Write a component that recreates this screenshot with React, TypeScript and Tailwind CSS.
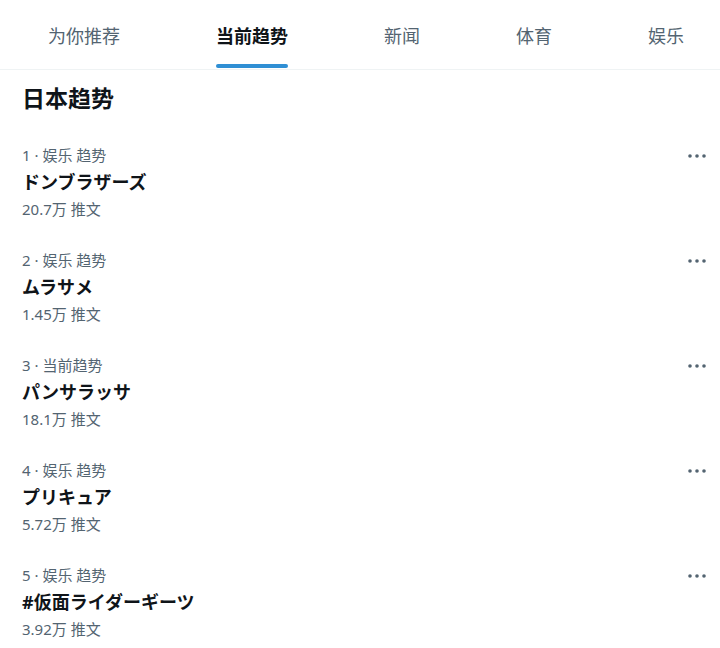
import React from 'react'

const tabs = ['为你推荐', '当前趋势', '新闻', '体育', '娱乐']

const trends = [
  { rank: 1, cat: '娱乐 趋势', name: 'ドンブラザーズ', count: '20.7万 推文' },
  { rank: 2, cat: '娱乐 趋势', name: 'ムラサメ', count: '1.45万 推文' },
  { rank: 3, cat: '当前趋势', name: 'パンサラッサ', count: '18.1万 推文' },
  { rank: 4, cat: '娱乐 趋势', name: 'プリキュア', count: '5.72万 推文' },
  { rank: 5, cat: '娱乐 趋势', name: '#仮面ライダーギーツ', count: '3.92万 推文' },
]

function Dots() {
  return (
    <svg width="18" height="6" viewBox="0 0 18 6" className="fill-[#536471]">
      <circle cx="2" cy="3" r="1.8" />
      <circle cx="9" cy="3" r="1.8" />
      <circle cx="16" cy="3" r="1.8" />
    </svg>
  )
}

export default function App() {
  return (
    <div className="w-[720px] h-[648px] bg-white overflow-hidden font-['Noto_Sans','Noto_Sans_CJK_SC',sans-serif] text-[#0f1419]">
      <nav className="flex h-[70px] border-b border-[#eff3f4] overflow-hidden">
        { tabs.map((t, i) => (
          <div key={ t } className="px-[48px] shrink-0 flex justify-center">
            <div className="inline-flex flex-col items-stretch pt-[24px]">
              <span className={`text-[18px] leading-[24px] whitespace-nowrap ${ i === 1 ? 'font-bold text-[#0f1419]' : 'text-[#536471]' }`}>{ t }</span>
              <span className={`mt-[16px] h-[4px] rounded-full ${ i === 1 ? 'bg-[#2f8fd4]' : 'bg-transparent' }`} />
            </div>
          </div>
        )) }
      </nav>

      <h2 className="px-[22px] pt-[13px] pb-[17px] text-[23px] leading-[30px] font-bold">日本趋势</h2>

      <ul>
        { trends.map(tr => (
          <li key={ tr.rank } className="pl-[22px] pr-[14px] py-3 flex justify-between">
            <div className="flex flex-col">
              <span className="text-[15px] leading-[27px] text-[#536471]">{ tr.rank } · { tr.cat }</span>
              <span className="text-[18px] leading-[27px] font-bold">{ tr.name }</span>
              <span className="text-[15px] leading-[27px] text-[#536471]">{ tr.count }</span>
            </div>
            <div className="h-[27px] flex items-center">
              <Dots />
            </div>
          </li>
        )) }
      </ul>
    </div>
  )
}
